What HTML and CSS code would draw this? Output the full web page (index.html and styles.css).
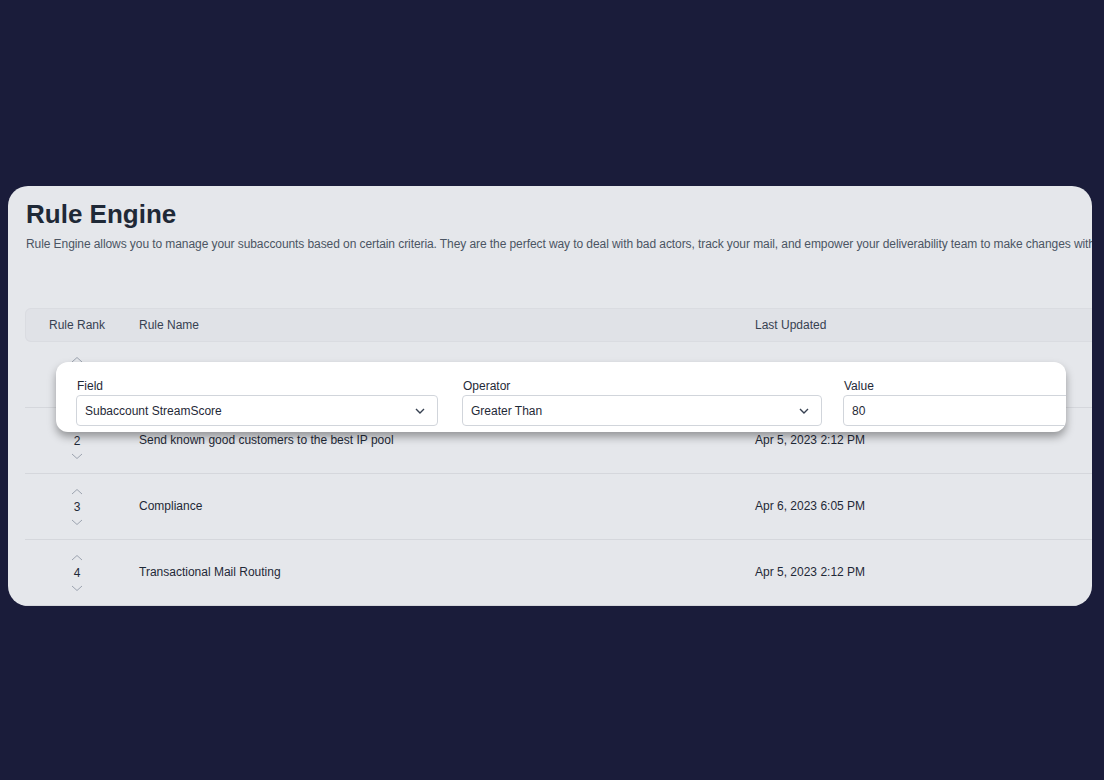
FILE: index.html
```html
<!DOCTYPE html>
<html lang="en">
<head>
    <meta charset="UTF-8">
    <meta name="viewport" content="width=device-width, initial-scale=1.0">
    <title>Rule Engine</title>
    <link rel="stylesheet" href="styles.css">
</head>
<body>

<div class="tarjeta">
    <h1 class="titulo">Rule Engine</h1>
    <p class="descripcion">Rule Engine allows you to manage your subaccounts based on certain criteria. They are the perfect way to deal with bad actors, track your mail, and empower your deliverability team to make changes without waiting on engineering resources.</p>

    <div class="tabla">
        <div class="fila cabecera">
            <div class="celda rango">Rule Rank</div>
            <div class="celda">Rule Name</div>
            <div class="celda">Last Updated</div>
        </div>

        <div class="fila">
            <div class="celda rango">
                <svg class="flecha" width="12" height="7" viewBox="0 0 12 7"><path d="M1 6 L6 1.5 L11 6" /></svg>
                <span>1</span>
                <svg class="flecha" width="12" height="7" viewBox="0 0 12 7"><path d="M1 1 L6 5.5 L11 1" /></svg>
            </div>
            <div class="celda">Throttle low scoring subaccounts</div>
            <div class="celda">Apr 5, 2023 2:12 PM</div>
        </div>

        <div class="fila">
            <div class="celda rango">
                <svg class="flecha" width="12" height="7" viewBox="0 0 12 7"><path d="M1 6 L6 1.5 L11 6" /></svg>
                <span>2</span>
                <svg class="flecha" width="12" height="7" viewBox="0 0 12 7"><path d="M1 1 L6 5.5 L11 1" /></svg>
            </div>
            <div class="celda">Send known good customers to the best IP pool</div>
            <div class="celda">Apr 5, 2023 2:12 PM</div>
        </div>

        <div class="fila">
            <div class="celda rango">
                <svg class="flecha" width="12" height="7" viewBox="0 0 12 7"><path d="M1 6 L6 1.5 L11 6" /></svg>
                <span>3</span>
                <svg class="flecha" width="12" height="7" viewBox="0 0 12 7"><path d="M1 1 L6 5.5 L11 1" /></svg>
            </div>
            <div class="celda">Compliance</div>
            <div class="celda">Apr 6, 2023 6:05 PM</div>
        </div>

        <div class="fila">
            <div class="celda rango">
                <svg class="flecha" width="12" height="7" viewBox="0 0 12 7"><path d="M1 6 L6 1.5 L11 6" /></svg>
                <span>4</span>
                <svg class="flecha" width="12" height="7" viewBox="0 0 12 7"><path d="M1 1 L6 5.5 L11 1" /></svg>
            </div>
            <div class="celda">Transactional Mail Routing</div>
            <div class="celda">Apr 5, 2023 2:12 PM</div>
        </div>
    </div>

    <!-- Recuadro flotante con la condición de la regla -->
    <div class="condicion">
        <div class="campo campo-field">
            <label>Field</label>
            <div class="selector">
                <span>Subaccount StreamScore</span>
                <svg width="10" height="6" viewBox="0 0 10 6"><path d="M1 1 L5 5 L9 1" /></svg>
            </div>
        </div>
        <div class="campo campo-operador">
            <label>Operator</label>
            <div class="selector">
                <span>Greater Than</span>
                <svg width="10" height="6" viewBox="0 0 10 6"><path d="M1 1 L5 5 L9 1" /></svg>
            </div>
        </div>
        <div class="campo campo-valor">
            <label>Value</label>
            <div class="selector">
                <span>80</span>
            </div>
        </div>
    </div>
</div>

</body>
</html>
```

FILE: styles.css
```css
/* Fondo oscuro y tarjeta principal */
body {
    margin: 0;
    background-color: #1a1c3a;
    font-family: "Liberation Sans", Arial, sans-serif;
    height: 780px;
    overflow: hidden;
}

.tarjeta {
    position: relative;
    margin: 186px 12px 0 8px;
    height: 420px;
    background-color: #e5e7eb;
    border-radius: 20px;
    overflow: hidden;
    padding-left: 17px;
    box-sizing: border-box;
}

.titulo {
    margin: 0 0 0 1px;
    padding-top: 12px;
    font-size: 26px;
    line-height: 32px;
    font-weight: bold;
    color: #1f2937;
}

.descripcion {
    margin: 6px 0 0 1px;
    font-size: 12px;
    line-height: 16px;
    letter-spacing: -0.08px;
    color: #4b5563;
    white-space: nowrap;
}

/* Tabla de reglas */
.tabla {
    margin-top: 56px;
    width: 1100px;
}

.fila {
    display: grid;
    grid-template-columns: 114px 616px 1fr;
    align-items: center;
    height: 66px;
    box-sizing: border-box;
    border-bottom: 1px solid #d5d7dc;
    font-size: 12px;
    color: #1f2937;
}

.fila.cabecera {
    height: 34px;
    background-color: #e0e2e7;
    border-bottom: none;
    box-shadow: inset 0 0 0 1px #dadce1;
    border-radius: 6px 0 0 6px;
    color: #374151;
}

.celda {
    line-height: 15px;
}

.rango {
    padding-left: 24px;
}

.fila:not(.cabecera) .rango {
    width: 56px;
    display: flex;
    flex-direction: column;
    align-items: center;
    gap: 5px;
}

.fila .rango span {
    line-height: 14px;
}

.flecha path {
    fill: none;
    stroke: #9ca3af;
    stroke-width: 1;
}

/* Recuadro de condición */
.condicion {
    position: absolute;
    top: 176px;
    left: 48px;
    width: 1010px;
    height: 70px;
    box-sizing: border-box;
    padding: 17px 0 0 20px;
    background-color: #ffffff;
    border-radius: 12px;
    box-shadow: 0 5px 8px rgba(0, 0, 0, 0.35);
    overflow: hidden;
    display: flex;
}

.campo {
    flex-shrink: 0;
}

.campo label {
    display: block;
    font-size: 12px;
    line-height: 14px;
    color: #1f2937;
    margin-bottom: 2px;
    padding-left: 1px;
}

.campo-field {
    width: 362px;
    margin-right: 24px;
}

.campo-operador {
    width: 360px;
    margin-right: 21px;
}

.campo-valor {
    width: 300px;
}

.selector {
    height: 31px;
    box-sizing: border-box;
    border: 1px solid #d1d5db;
    border-radius: 4px;
    padding: 0 12px 0 8px;
    display: flex;
    align-items: center;
    justify-content: space-between;
    font-size: 12px;
    color: #1f2937;
}

.selector svg path {
    fill: none;
    stroke: #374151;
    stroke-width: 1.4;
}
```
